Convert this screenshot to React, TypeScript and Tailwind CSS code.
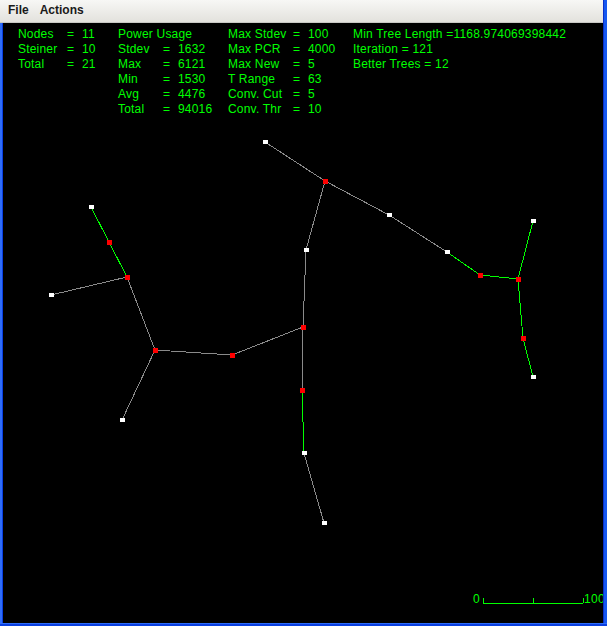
const font = { fontFamily: '"Liberation Sans", Arial, sans-serif' };

type P = [number, number];

// page coordinates of the tree nodes
const terminals: P[] = [
  [265, 142], [91, 207], [51, 295], [122, 420], [389, 215], [306, 250],
  [447, 252], [533, 221], [533, 377], [304, 453], [324, 523],
];

const steiner: P[] = [
  [325, 181], [109, 242], [127, 277], [155, 350], [232, 355],
  [303, 327], [302, 390], [480, 275], [518, 279], [523, 338],
];

const edges: [P, P, boolean][] = [
  [[265, 142], [325, 181], false],
  [[325, 181], [389, 215], false],
  [[389, 215], [447, 252], false],
  [[447, 252], [480, 275], true],
  [[480, 275], [518, 279], true],
  [[518, 279], [533, 221], true],
  [[518, 279], [523, 338], true],
  [[523, 338], [533, 377], true],
  [[325, 181], [306, 250], false],
  [[306, 250], [303, 327], false],
  [[303, 327], [232, 355], false],
  [[303, 327], [302, 390], false],
  [[302, 390], [304, 453], true],
  [[304, 453], [324, 523], false],
  [[232, 355], [155, 350], false],
  [[155, 350], [127, 277], false],
  [[155, 350], [122, 420], false],
  [[127, 277], [51, 295], false],
  [[127, 277], [109, 242], true],
  [[109, 242], [91, 207], true],
];

type Row = [string, string];

function StatCol({ cols, rows, header }: { cols: string; rows: Row[]; header?: string }) {
  return (
    <div className={`grid ${cols} auto-rows-[15px] leading-[15px]`}>
      {header && <div className="col-span-3 whitespace-nowrap">{header}</div>}
      {rows.map(([k, v]) => (
        <div key={k} className="contents">
          <span className="whitespace-nowrap">{k}</span>
          <span>=</span>
          <span>{v}</span>
        </div>
      ))}
    </div>
  );
}

function Graph() {
  return (
    <svg className="absolute inset-0" width={600} height={600} shapeRendering="crispEdges">
      <g transform="translate(-3,-23)">
        {edges.map(([a, b, g], i) => (
          <line key={i} x1={a[0]} y1={a[1]} x2={b[0]} y2={b[1]} stroke={g ? "#00ff00" : "#8a8a8a"} strokeWidth={1} />
        ))}
        {terminals.map(([x, y], i) => (
          <rect key={"t" + i} x={x - 2} y={y - 2} width={5} height={4} fill="#ffffff" />
        ))}
        {steiner.map(([x, y], i) => (
          <rect key={"s" + i} x={x - 2} y={y - 2} width={5} height={5} fill="#ff0000" />
        ))}
        {/* scale bar */}
        <line x1={483} y1={603} x2={583} y2={603} stroke="#00ff00" />
        <line x1={483} y1={598} x2={483} y2={603} stroke="#00ff00" />
        <line x1={533} y1={598} x2={533} y2={603} stroke="#00ff00" />
        <line x1={583} y1={598} x2={583} y2={603} stroke="#00ff00" />
        <text x={473} y={603} fill="#00ff00" fontSize={12} style={font}>0</text>
        <text x={584} y={603} fill="#00ff00" fontSize={12} letterSpacing={0.3} style={font}>100</text>
      </g>
    </svg>
  );
}

export default function App() {
  return (
    <div className="w-[607px] h-[626px] flex flex-col bg-black overflow-hidden">
      {/* menu bar + right frame */}
      <div className="flex h-[23px]">
        <div
          className="w-[603px] flex items-center gap-[11px] pl-[8px] pb-[2px] text-[12px] font-bold text-[#1a1a1a] bg-gradient-to-b from-[#f7f7f5] to-[#e3e2dd] border-b border-[#c8c8c4]"
          style={{ fontFamily: '"Liberation Sans", Tahoma, sans-serif' }}
        >
          <span>File</span>
          <span>Actions</span>
        </div>
        <div className="w-[4px] flex">
          <div className="w-[1px] bg-[#0a2fc8]" />
          <div className="flex-1 bg-[#1658f0]" />
        </div>
      </div>

      <div className="flex h-[600px]">
        <div className="w-[3px] flex">
          <div className="flex-1 bg-[#2f6df8]" />
          <div className="w-[1px] bg-[#0a3fe0]" />
        </div>

        {/* drawing canvas */}
        <div className="relative w-[600px] h-[600px] bg-black overflow-hidden">
          <Graph />
          <div className="relative flex pt-[4px] pl-[15px] text-[12px] tracking-[0.2px] text-[#00ff00]" style={font}>
            <StatCol
              cols="grid-cols-[49px_15px_36px]"
              rows={[["Nodes", "11"], ["Steiner", "10"], ["Total", "21"]]}
            />
            <StatCol
              cols="grid-cols-[45px_15px_50px]"
              header="Power Usage"
              rows={[["Stdev", "1632"], ["Max", "6121"], ["Min", "1530"], ["Avg", "4476"], ["Total", "94016"]]}
            />
            <StatCol
              cols="grid-cols-[65px_15px_45px]"
              rows={[["Max Stdev", "100"], ["Max PCR", "4000"], ["Max New", "5"], ["T Range", "63"], ["Conv. Cut", "5"], ["Conv. Thr", "10"]]}
            />
            <div className="flex flex-col leading-[15px] whitespace-nowrap">
              <span>Min Tree Length =1168.974069398442</span>
              <span>Iteration = 121</span>
              <span>Better Trees = 12</span>
            </div>
          </div>
        </div>

        <div className="w-[4px] flex">
          <div className="w-[1px] bg-[#0a2fc8]" />
          <div className="flex-1 bg-[#1658f0]" />
        </div>
      </div>

      <div className="flex-1 flex flex-col">
        <div className="h-[1px] bg-[#2f6df8]" />
        <div className="flex-1 bg-[#0a3fe0]" />
      </div>
    </div>
  );
}
